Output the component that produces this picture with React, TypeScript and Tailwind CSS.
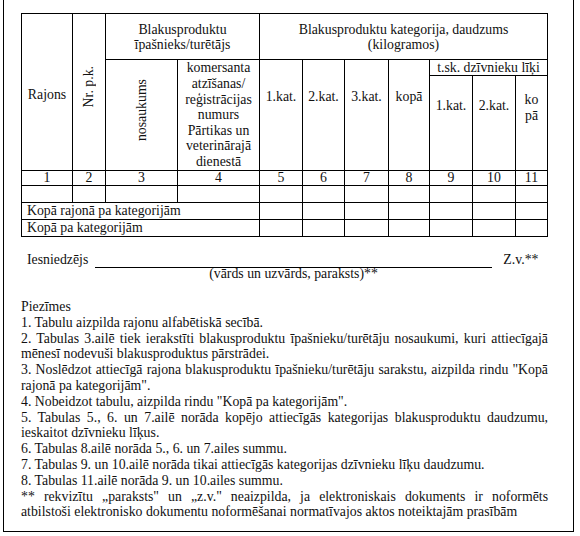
import type { ReactNode } from "react";

function Cell({ className = "", children }: { className?: string; children?: ReactNode }) {
  return <div className={"border-l border-t border-black " + className}>{children}</div>;
}

const notes: { text: string; justify?: boolean }[] = [
  { text: "Piezīmes" },
  { text: "1. Tabulu aizpilda rajonu alfabētiskā secībā." },
  {
    text: "2. Tabulas 3.ailē tiek ierakstīti blakusproduktu īpašnieku/turētāju nosaukumi, kuri attiecīgajā",
    justify: true,
  },
  { text: "mēnesī nodevuši blakusproduktus pārstrādei." },
  {
    text: "3. Noslēdzot attiecīgā rajona blakusproduktu īpašnieku/turētāju sarakstu, aizpilda rindu \"Kopā",
    justify: true,
  },
  { text: "rajonā pa kategorijām\"." },
  { text: "4. Nobeidzot tabulu, aizpilda rindu \"Kopā pa kategorijām\"." },
  {
    text: "5. Tabulas 5., 6. un 7.ailē norāda kopējo attiecīgās kategorijas blakusproduktu daudzumu,",
    justify: true,
  },
  { text: "ieskaitot dzīvnieku līķus." },
  { text: "6. Tabulas 8.ailē norāda 5., 6. un 7.ailes summu." },
  { text: "7. Tabulas 9. un 10.ailē norāda tikai attiecīgās kategorijas dzīvnieku līķu daudzumu." },
  { text: "8. Tabulas 11.ailē norāda 9. un 10.ailes summu." },
  {
    text: "** rekvizītu „paraksts\" un „z.v.\" neaizpilda, ja elektroniskais dokuments ir noformēts",
    justify: true,
  },
  { text: "atbilstoši elektronisko dokumentu noformēšanai normatīvajos aktos noteiktajām prasībām" },
];

const numbers = ["1", "2", "3", "4", "5", "6", "7", "8", "9", "10", "11"];

export default function App() {
  return (
    <div className="h-[536px] w-[580px] bg-white font-[Liberation_Serif,Times_New_Roman,serif] text-[13.8px] leading-[16px] text-[#111]">
      <div className="ml-[3px] h-[532px] w-[571px] border-x border-b border-black pl-[17px] pt-[13px]">
        {/* table */}
        <div className="grid w-[527px] grid-cols-[51px_33px_72px_82px_43px_42px_44px_41px_43px_43px_32px] grid-rows-[46px_16px_95px_15px_17px_17px_17px] border-b border-r border-black">
          <Cell className="col-start-1 row-span-3 row-start-1 flex items-center justify-center pt-[6px]">
            Rajons
          </Cell>
          <Cell className="col-start-2 row-span-3 row-start-1 flex items-center justify-center pb-[11px]">
            <span className="rotate-180 [writing-mode:vertical-rl]">Nr. p.k.</span>
          </Cell>
          <Cell className="col-span-2 col-start-3 row-start-1 flex items-center justify-center text-center leading-[15px]">
            Blakusproduktu
            <br />
            īpašnieks/turētājs
          </Cell>
          <Cell className="col-span-7 col-start-5 row-start-1 flex items-center justify-center text-center leading-[15px]">
            Blakusproduktu kategorija, daudzums
            <br />
            (kilogramos)
          </Cell>

          <Cell className="col-start-3 row-span-2 row-start-2 flex items-center justify-center pb-[9px]">
            <span className="rotate-180 [writing-mode:vertical-rl]">nosaukums</span>
          </Cell>
          <Cell className="col-start-4 row-span-2 row-start-2 flex items-center justify-center text-center leading-[15.6px]">
            komersanta
            <br />
            atzīšanas/
            <br />
            reģistrācijas
            <br />
            numurs
            <br />
            Pārtikas un
            <br />
            veterinārajā
            <br />
            dienestā
          </Cell>
          <Cell className="col-start-5 row-span-2 row-start-2 pt-[29px] text-center">1.kat.</Cell>
          <Cell className="col-start-6 row-span-2 row-start-2 pt-[29px] text-center">2.kat.</Cell>
          <Cell className="col-start-7 row-span-2 row-start-2 pt-[29px] text-center">3.kat.</Cell>
          <Cell className="col-start-8 row-span-2 row-start-2 pt-[29px] text-center">kopā</Cell>
          <Cell className="col-span-3 col-start-9 row-start-2 flex items-center justify-center whitespace-nowrap">
            t.sk. dzīvnieku līķi
          </Cell>
          <Cell className="col-start-9 row-start-3 pt-[22px] text-center">1.kat.</Cell>
          <Cell className="col-start-10 row-start-3 pt-[22px] text-center">2.kat.</Cell>
          <Cell className="col-start-11 row-start-3 pt-[16px] text-center">
            ko
            <br />
            pā
          </Cell>

          {numbers.map((n) => (
            <Cell key={n} className="row-start-4 flex items-center justify-center">
              {n}
            </Cell>
          ))}
          {numbers.map((n) => (
            <Cell key={"e" + n} className="row-start-5" />
          ))}

          <Cell className="col-span-4 col-start-1 row-start-6 flex items-center pl-[5px]">
            Kopā rajonā pa kategorijām
          </Cell>
          {numbers.slice(4).map((n) => (
            <Cell key={"r" + n} className="row-start-6" />
          ))}
          <Cell className="col-span-4 col-start-1 row-start-7 flex items-center pl-[5px]">
            Kopā pa kategorijām
          </Cell>
          {numbers.slice(4).map((n) => (
            <Cell key={"t" + n} className="row-start-7" />
          ))}
        </div>

        {/* signature */}
        <div className="mt-[15px] flex items-end pl-[6px]">
          <span>Iesniedzējs</span>
          <span className="ml-[7px] h-px w-[397px] bg-black" />
          <span className="ml-[11px]">Z.v.**</span>
        </div>
        <div className="ml-[74px] w-[397px] text-center leading-[12px]">(vārds un uzvārds, paraksts)**</div>

        {/* notes */}
        <div className="mt-[19px] w-[527px] leading-[15.8px]">
          {notes.map((n, i) => (
            <div
              key={i}
              className={
                n.justify
                  ? "whitespace-nowrap text-justify [text-align-last:justify]"
                  : "whitespace-nowrap"
              }
            >
              {n.text}
            </div>
          ))}
        </div>
      </div>
    </div>
  );
}
